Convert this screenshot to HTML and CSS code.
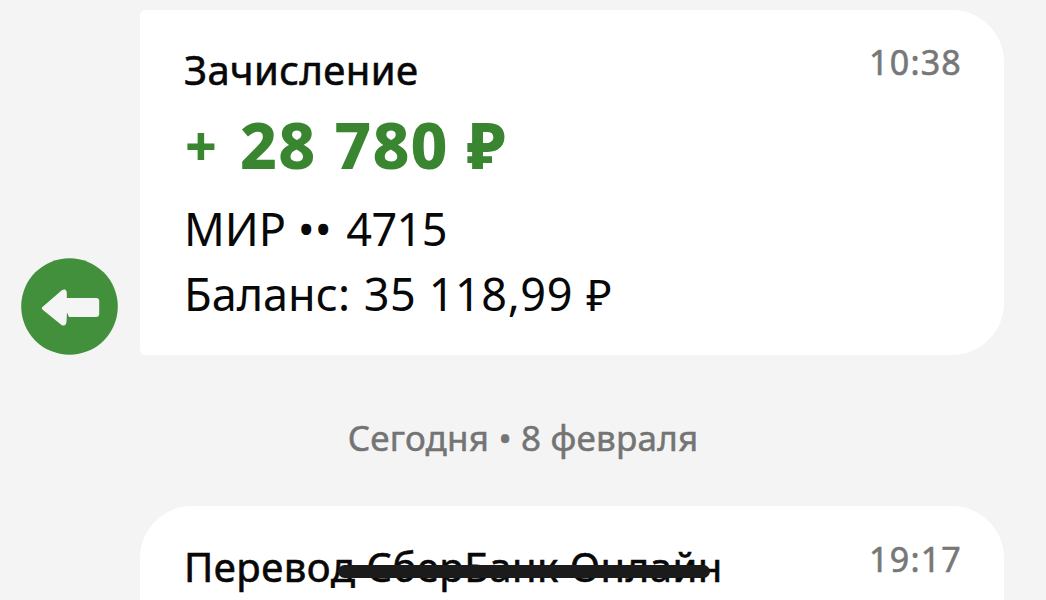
FILE: index.html
```html
<!DOCTYPE html>
<html lang="ru">
<head>
<meta charset="utf-8">
<title>Сообщения</title>
<link rel="stylesheet" href="styles.css">
</head>
<body>
<main class="feed">
  <article class="message">
    <svg class="badge" viewBox="0 0 97 97" aria-hidden="true">
      <circle cx="48.5" cy="48.5" r="48.3" fill="#42903b"/>
      <path d="M22 48.5 40.500 32.500Q45.500 29.500 45.800 35V40H75Q78.200 40 78.200 43V56Q78.200 59 75 59H48L46 54.500 45.500 63.500Q45 69 40.500 67L22 52Q19.500 50 22 48.500Z" fill="#f5f5f5"/>
    </svg>
    <section class="card">
      <div class="details">
        <h2 class="title">Зачисление</h2>
        <p class="amount"><span class="sign">+</span><span>28 780</span><span class="currency">₽</span></p>
        <p class="line line-card">МИР <span class="dots">••</span> <span class="digits">4715</span></p>
        <p class="line"><span>Баланс:</span> <span class="balance">35 118,99 <span class="ruble">₽</span></span></p>
      </div>
      <time class="time">10:38</time>
    </section>
  </article>
  <p class="date">Сегодня • 8 февраля</p>
  <article class="message">
    <section class="card card-next">
      <h2 class="title title-next">Перевод СберБанк Онлайн<span class="strike"></span></h2>
      <time class="time">19:17</time>
    </section>
  </article>
</main>
</body>
</html>
```
FILE: styles.css
```css
* { box-sizing: border-box; }
body {
  margin: 0;
  height: 600px;
  overflow: hidden;
  background: #f4f4f4;
  color: #080808;
  font-family: "Noto Sans", "Open Sans", sans-serif;
}
h2, p { margin: 0; white-space: nowrap; }
.feed { padding-top: 10px; }
.message {
  display: flex;
  align-items: flex-end;
  justify-content: flex-end;
  gap: 22px;
  padding-right: 42px;
}
.badge { width: 97px; height: 97px; flex: none; }
.card {
  display: flex;
  justify-content: space-between;
  align-items: flex-start;
  width: 864px;
  height: 345px;
  padding: 29px 43px 0 44px;
  background: #fff;
  border-radius: 6px 52px 52px 6px;
}
.card-next {
  height: 94px;
  padding-top: 30px;
  border-radius: 52px 52px 0 0;
}
.title {
  font-size: 40px;
  font-weight: 400;
  line-height: 62px;
  letter-spacing: 0.4px;
  -webkit-text-stroke: 0.6px currentColor;
}
.title-next { position: relative; letter-spacing: 0.5px; }
.strike {
  position: absolute;
  left: 154px;
  top: 29px;
  width: 372px;
  height: 13px;
  border-radius: 7px;
  background: #1b1b1b;
}
.amount {
  display: flex;
  color: #3a8530;
  font-size: 64px;
  font-weight: 800;
  line-height: 88px;
  letter-spacing: 1.2px;
}
.sign { width: 56px; padding-left: 1px; font-size: 55px; }
.currency { margin-left: 18px; }
.line {
  font-size: 45px;
  line-height: 65px;
}
.line-card { margin-top: 7px; }
.digits { margin-left: 3px; letter-spacing: -0.6px; }
.balance { margin-left: 2px; letter-spacing: 0.6px; }
.ruble { margin-left: 1px; font-size: 44px; }
.time {
  margin-top: 3px;
  margin-right: -1px;
  color: #777;
  font-size: 34px;
  line-height: 40px;
  letter-spacing: 1.2px;
  -webkit-text-stroke: 0.6px currentColor;
}
.date {
  margin-top: 58px;
  margin-bottom: 43px;
  color: #747474;
  font-size: 35px;
  line-height: 50px;
  letter-spacing: 0.2px;
  text-align: center;
  -webkit-text-stroke: 0.5px currentColor;
}
```
